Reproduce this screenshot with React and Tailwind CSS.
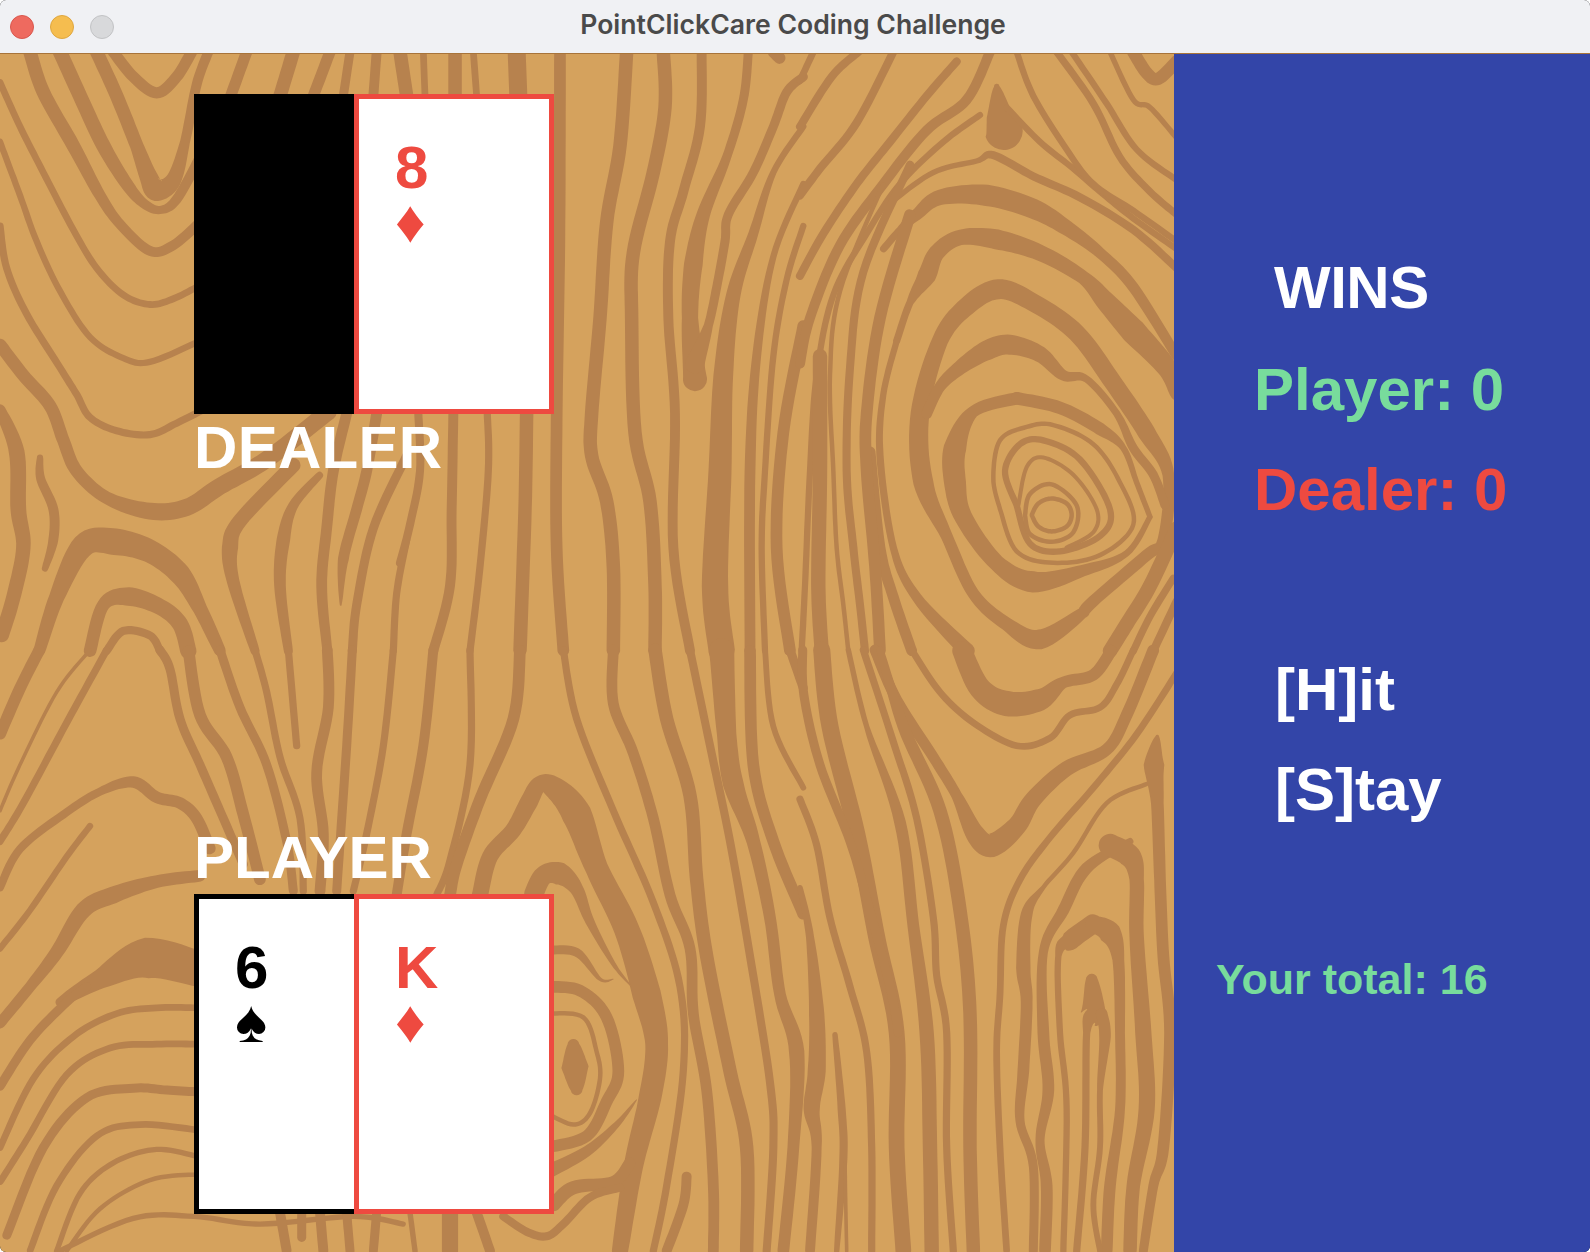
const WOOD = '#b7824e';

// grain traced from the reference, one zone per crop: [width, "x,y[,w] ..."]
const grain = [
  { ox: 0, oy: 50, lines: [
    [25, '340,5 400,70 470,112 530,70 575,5'],
    [30, '290,5 350,120 410,250 445,330,40 470,365,55 520,340,35 555,240,22 590,90,22 625,5'],
    [32, '180,5 240,120 310,250 380,350,28 430,400,22 480,418,18 530,390,22 600,280'],
    [30, '90,5 130,110 220,250 300,380,25 360,455,22 450,525,22 520,510 600,450'],
    [15, '0,85 60,200 130,320 220,470 290,570 370,640 450,665 520,650 600,615'],
    [14, '0,240 60,380 110,500 180,630 270,750 370,805 450,815 600,760'],
    [16, '0,460 20,570 80,690 180,830 230,900 270,960 350,995 450,1005 530,975 610,940'],
    [28, '0,770 70,850 150,930 190,1020 230,1100 320,1170 450,1205,38 560,1195 660,1140 800,1070 985,945'],
    [24, '0,940 50,1050,35 55,1200,35 70,1300,32 40,1430 5,1530'],
    [14, '120,1065 122,1120,20 160,1200,22 160,1280 135,1355,14'],
    [26, '118,1570 170,1430,34 250,1295,56 345,1285,66 450,1310,55 540,1370,50 600,1460,32 660,1570,26'],
    [28, '270,1570 310,1450 385,1428,42 480,1455,36 540,1500 565,1570'],
    [18, '320,1570 370,1518 450,1530 480,1570'],
    [16, '960,1110 880,1190,22 850,1280,30 840,1400,26 865,1570,20'],
    [32, '880,1085 720,1230 690,1300,36 700,1390,28 765,1570,20'],
    [24, '1040,950 1000,1100 980,1250 965,1400 982,1570,22'],
    [24, '1130,950 1100,1100 1070,1200 1030,1330 1022,1450,4'],
    [20, '1220,1060 1120,1250 1070,1450 1057,1570'],
    [16, '1220,1280 1190,1420 1180,1570'],
    [25, '740,5 690,125'],
    [30, '880,5 840,120'],
    [25, '990,5 940,120'],
    [20, '1050,5 1030,120'],
    [22, '1130,5 1120,120'],
  ] },
  { ox: 400, oy: 50, lines: [
    [30, '0,5 20,120'],
    [15, '70,5 75,120'],
    [30, '165,5 165,120'],
    [15, '220,5 230,120'],
    [40, '350,5 355,120'],
    [26, '480,5 478,500 470,960 470,1300 490,1570'],
    [30, '680,5 660,250 620,450 600,700 575,950 575,1060 620,1180 640,1350 640,1570'],
    [30, '790,5 795,150 760,320 700,530 695,700 705,1000 750,1180 765,1400 765,1570'],
    [22, '905,5 900,200 850,370 810,500 805,700 825,950 820,1300 870,1570'],
    [20, '1045,5 1030,130 980,280 910,430,30 880,560,42 870,700,36 885,860,58'],
    [20, '885,820,46 925,720,20 950,620 975,500 985,430 1060,320 1120,200 1160,110 1210,70'],
    [14, '1210,200 1120,320 1060,480,22 1000,640,32 970,850,45 960,1100,55 945,1400,65 965,1570,65'],
    [14, '1210,350 1120,540 1070,800,20 1050,1100,24 1050,1570'],
    [14, '1210,460 1160,600 1120,800 1095,1100 1085,1300 1095,1570'],
    [26, '1210,720 1150,1000 1130,1300 1170,1570'],
    [26, '1120,5 1140,22'],
    [18, '55,950 60,1100 30,1240 0,1340'],
    [22, '160,950 155,1200 150,1400 100,1570'],
    [16, '262,950 265,1100 240,1350 210,1570'],
    [30, '380,950 375,1200 360,1570'],
  ] },
  { ox: 800, oy: 50, lines: [
    [15, '40,5 0,80'],
    [18, '175,5 95,70 0,200'],
    [18, '280,5 170,190 60,310 0,380'],
    [18, '470,30 380,120 270,240 170,350 70,480 0,590'],
    [22, '570,5 500,130 380,210 250,350 120,510 30,700 0,820'],
    [20, '590,95,12 600,170,66 612,215,100'],
    [14, '540,170 430,240 300,350 200,480 100,640 50,850 30,1100 15,1400 5,1570'],
    [14, '620,150 720,240 820,310 900,370 1000,440 1130,520'],
    [14, '650,5 700,120 800,260 880,350 1000,420 1130,500'],
    [16, '770,5 880,140 960,280 1050,370 1130,430'],
    [14, '815,5 920,140 1010,260 1130,340'],
    [12, '930,5 1000,130 1050,150 1130,230'],
    [28, '1000,5 1040,60 1075,75 1130,30'],
    [12, '270,400 400,320 530,290 580,275,18 700,330 840,385 1000,470 1130,570'],
    [16, '250,520 300,470 350,430,26 420,385,34 560,380,50 700,415,46 800,465,34 900,530,24 1000,620 1130,800,22'],
    [16, '290,760 330,660 380,590,42 410,530,36 480,490,34 590,495,46 720,530,36 850,595,30 920,660,46 1000,735,62 1100,830,46 1130,900,28'],
    [14, '290,760 250,900 240,1060,16 280,1300 350,1430,22 500,1570,36'],
    [24, '210,1050 240,1300 280,1430 335,1570'],
    [24, '850,1470 720,1540,46 620,1500,30 520,1420,26 440,1270 370,1130,46 360,950,42 420,760,36 500,670,42 595,625,46 700,660,40 830,740 940,870 1040,1000 1105,1110,26 1090,1280 1040,1320 880,1440 850,1470'],
    [32, '380,950,24 420,880 480,830,32 560,785,46 630,770,46 720,795,36 790,850,24 860,860,16 950,950 1000,1040,20 1060,1110 1095,1190'],
    [46, '650,910,28 520,945,26 465,1040,54 465,1130,52 490,1220,40 590,1340,36 700,1390,50 850,1360,26 980,1315,14 1050,1220,12'],
    [28, '650,910 780,935 900,990 970,1040,14 1010,1130,12 1050,1220'],
    [10, '600,1200 580,1120 600,1020 680,985 760,980 880,1030 960,1130 1000,1240 900,1320 760,1340 650,1310 600,1200'],
    [14, '650,1190 615,1100 660,1030 730,1020 840,1070 930,1200 900,1270 780,1310 690,1290 650,1190'],
    [9, '655,1190 680,1090 730,1065 820,1110 890,1200 880,1260 800,1300'],
    [10, '675,1215 690,1160 755,1135 830,1190 820,1260 755,1285 690,1265 675,1215'],
    [10, '695,1215 715,1185 755,1172 800,1185 815,1215 800,1245 755,1258 715,1245 695,1215'],
    [32, '60,800 60,1100 55,1400 65,1570'],
    [10, '250,350 120,630 90,850 100,1100 110,1300 130,1450 145,1570'],
    [18, '330,300 190,580 150,830 140,1100 160,1300 180,1450 195,1570'],
    [26, '330,430 240,700 200,950 200,1100 225,1350 240,1570'],
    [32, '1130,1250 1050,1400 980,1500 930,1570'],
    [16, '1120,1380 1050,1480 1000,1570'],
    [18, '1130,1440 1060,1570'],
  ] },
  { ox: 0, oy: 650, lines: [
    [26, '118,0 60,100 0,220'],
    [8, '270,0 170,110 60,300 0,420'],
    [16, '320,0 200,190 70,400 0,500'],
    [20, '480,0 510,50 540,180 600,300 660,420 730,560'],
    [26, '565,0 600,170 680,280 730,430 780,600'],
    [20, '660,0 720,150 800,300 860,500 880,630'],
    [16, '765,0 800,110 840,280 900,440 910,630'],
    [16, '865,0 890,250'],
    [24, '982,0 985,150 950,320 970,480 960,630'],
    [20, '1057,0 1040,250 1010,630'],
    [16, '1180,0 1150,250 1100,480 1060,630'],
    [18, '0,620 60,520 190,430 300,370 400,345,26 470,385 540,400 590,440 630,520'],
    [14, '0,780 90,680 200,540 270,460'],
    [24, '0,975 90,880 170,790,30 250,680,36 340,640,38 470,605,28 600,590,26'],
    [20, '180,920 300,860,44 440,805,108 600,835,90'],
    [20, '0,1140 90,1020 200,920 260,880'],
    [15, '0,1300 100,1120 220,1010 350,950 470,935 600,935'],
    [15, '0,1390 80,1280 200,1110 330,1040 470,1030 600,1030'],
    [20, '20,1530 130,1300 260,1170 400,1145 500,1150 600,1155'],
    [15, '90,1570 170,1400 290,1270 420,1240 600,1255'],
    [12, '170,1570 240,1420 340,1340 470,1305 600,1325'],
    [10, '200,1570 300,1460 450,1385 600,1370'],
    [12, '180,1570 400,1485 582,1480 780,1500 1060,1480 1210,1500'],
    [22, '840,1470 860,1570'],
    [20, '905,1470 905,1535'],
    [22, '960,1470 970,1570'],
    [20, '1040,1470 1050,1570'],
    [20, '1130,1470 1120,1570'],
  ] },
  { ox: 400, oy: 650, lines: [
    [22, '100,0 70,250 20,480 -10,640'],
    [16, '210,0 210,300 150,550 110,640'],
    [26, '360,0 340,180 240,390 170,560 150,640'],
    [36, '240,640 270,540 340,470 385,400,40 420,350,36 470,365,56 530,430,76 590,570,54 680,730,62 740,900,72 770,1030,54 750,1170,54 700,1350,44 660,1570,36'],
    [44, '400,640 430,590 480,585,54 530,625,30 570,710,20 640,820,10 695,880,2'],
    [20, '440,785 530,790 600,860,8 640,860,2'],
    [26, '440,880 540,890 620,960 655,1100 620,1180 560,1270 440,1300'],
    [10, '440,950 550,960 590,1050 600,1120 570,1210 520,1240 440,1210'],
    [68, '520,1030,26 525,1090,68 530,1150,26'],
    [32, '440,1365 560,1310,24 650,1240,14 710,1175,2'],
    [30, '460,1450 520,1405 640,1390,26 690,1340'],
    [18, '310,1480 380,1520 440,1532 490,1500 570,1430 660,1405'],
    [16, '490,0 530,180 640,420 760,660 840,880 850,1100 800,1400 760,1570'],
    [24, '640,0 640,140 700,270 760,440 810,640 870,780 880,950 920,1150 940,1400 940,1570'],
    [21, '765,0,30 800,180 870,380 890,600 920,800 990,1100 1040,1300 1040,1570'],
    [18, '870,0 930,250 990,500 1050,800 1110,1130 1120,1300 1100,1570'],
    [62, '965,0 980,220,44 1000,350,48 1060,500,30 1110,700,26 1140,900,26 1190,1050,34 1180,1300,26 1150,1570,26'],
    [26, '1050,0 1060,300 1120,500 1210,690'],
    [13, '1095,0 1120,200 1210,360'],
    [20, '1170,0 1210,100'],
    [22, '860,1375 850,1450 800,1570'],
    [12, '30,1470 45,1570'],
    [36, '150,1470 150,1570'],
    [22, '230,1470 270,1570'],
  ] },
  { ox: 800, oy: 650, lines: [
    [44, '485,0 540,100,52 620,140,62 720,130,52 790,85,26 880,65,26 935,0'],
    [15, '335,0 420,110 520,190 650,250 750,230 810,170 900,150 950,90 1000,0'],
    [24, '225,0 290,130 400,280 470,380 525,480,44 575,510,58 650,460,44 700,390,38 800,310,34 920,260,26 980,170 1060,0'],
    [15, '1130,60 1010,220 880,360 750,490 660,600 610,720 600,900 590,1050 600,1300 620,1570'],
    [21, '1040,350,10 920,400 820,530 730,620 680,690,26 670,830,32 680,920,26 670,1100 660,1230,20 700,1350,20 700,1570'],
    [44, '1072,225,8 1062,300,48 1072,400,28 1080,600,26 1090,800 1110,1000 1090,1300 1060,1400,22 1030,1570,20'],
    [15, '990,500 860,570,26 790,680 730,790,20 730,1000,26 745,1150,26 720,1280,20 740,1400,26 735,1570'],
    [44, '930,510,54 990,540,54 1010,600,32 1010,750,32 1030,1000,36 1040,1200,36 1000,1400,30 990,1570,30'],
    [16, '880,715,44 810,760 775,800,14 780,1000 800,1200 790,1570'],
    [44, '880,715,36 930,740,54 955,810,26 960,1000,22 960,1200,22 930,1400,26 920,1570,26'],
    [26, '875,860,26 880,950,62 860,1000,16 855,1300 830,1570'],
    [26, '905,950,26 915,1010,26 900,1150,13 900,1300,13 880,1450 900,1570'],
    [38, '65,0 90,200 170,480 230,750 290,1000,35 290,1300,35 310,1570'],
    [12, '145,0 200,200 300,450,26 340,720 380,1000,32 390,1300 395,1570'],
    [16, '190,0 280,240 350,440 400,700 410,850 440,1000 440,1300 460,1570'],
    [16, '240,0 310,200,26 420,420,30 480,680 510,950 510,1300 520,1570'],
    [20, '8,0 12,120 60,300 150,500 200,650 270,880 295,1000'],
    [16, '0,390 50,510 90,700 150,880 200,1050 215,1300 215,1570'],
    [12, '0,620 30,750,18 50,950,34 50,1100,40 35,1200,36 50,1300,22 30,1570,22'],
    [12, '105,1005 125,1200,18 130,1330,18 110,1570,12'],
    [8, '135,1340 140,1570'],
  ] },
];

const thicken = (w) => w + Math.min(w * 0.35, 14);

const toPoint = (raw, zone, base) => {
  const [x, y, w] = raw.split(',').map(Number);
  return { x: zone.ox + x / 3, y: zone.oy + y / 2.613, base: w ?? base, w: thicken(w ?? base) / 3 };
};

// catmull-rom through the points, then an outline with the width at each sample
const ribbon = (zone, base, str) => {
  let last = base;
  const pts = str.split(' ').map((raw) => {
    const p = toPoint(raw, zone, last);
    last = p.base;
    return p;
  });
  const samples = [];
  for (let i = 0; i < pts.length - 1; i++) {
    const p0 = pts[Math.max(i - 1, 0)];
    const p1 = pts[i];
    const p2 = pts[i + 1];
    const p3 = pts[Math.min(i + 2, pts.length - 1)];
    for (let s = 0; s < 10; s++) {
      const t = s / 10;
      const cr = (a, b, c, d) =>
        0.5 * (2 * b + (c - a) * t + (2 * a - 5 * b + 4 * c - d) * t * t + (3 * b - a - 3 * c + d) * t * t * t);
      samples.push({ x: cr(p0.x, p1.x, p2.x, p3.x), y: cr(p0.y, p1.y, p2.y, p3.y), w: p1.w + (p2.w - p1.w) * t });
    }
  }
  samples.push(pts[pts.length - 1]);
  const left = [];
  const right = [];
  samples.forEach((p, i) => {
    const a = samples[Math.max(i - 1, 0)];
    const b = samples[Math.min(i + 1, samples.length - 1)];
    const len = Math.hypot(b.x - a.x, b.y - a.y) || 1;
    const nx = (-(b.y - a.y) / len) * (p.w / 2);
    const ny = ((b.x - a.x) / len) * (p.w / 2);
    left.push(`${(p.x + nx).toFixed(1)} ${(p.y + ny).toFixed(1)}`);
    right.unshift(`${(p.x - nx).toFixed(1)} ${(p.y - ny).toFixed(1)}`);
  });
  const endR = (pts[pts.length - 1].w / 2).toFixed(1);
  const startR = (pts[0].w / 2).toFixed(1);
  return `M${left.join('L')}A${endR} ${endR} 0 0 0 ${right[0]}L${right.join('L')}A${startR} ${startR} 0 0 0 ${left[0]}Z`;
};

const WoodGrain = () => (
  <svg className="absolute inset-0" width="1174" height="1198" viewBox="0 54 1174 1198">
    {grain.map((zone) =>
      zone.lines.map(([base, str], i) => <path key={`${zone.ox}-${zone.oy}-${i}`} d={ribbon(zone, base, str)} fill={WOOD} />)
    )}
  </svg>
);

const Card = ({ rank, suit, red, faceDown, second }) => (
  <div
    className={`w-[200px] h-[320px] border-[5px] pl-[36px] pt-[42px] font-bold text-[60px] leading-[54px] ${
      faceDown ? 'bg-black border-black' : 'bg-white'
    } ${!faceDown && (red ? 'border-[#ee4a40] text-[#ee4a40]' : 'border-black text-black')} ${second ? 'ml-[-40px] relative' : ''}`}
  >
    {!faceDown && (
      <>
        <div>{rank}</div>
        <div>{suit}</div>
      </>
    )}
  </div>
);

const SideRow = ({ children, className }) => <div className={`h-[100px] flex items-center font-bold ${className}`}>{children}</div>;

export default function App() {
  return (
    <div className="w-[1590px] h-[1252px] flex flex-col overflow-hidden bg-black rounded-[6px] font-['Liberation_Sans',sans-serif]">
      {/* Title bar */}
      <div className="h-[54px] shrink-0 bg-[#f0f1f4] flex items-center relative border-b border-[#a8743a]">
        <div className="flex gap-[16px] pl-[10px]">
          <span className="w-[24px] h-[24px] rounded-full bg-[#ee6a5f] border border-[#d9574d]" />
          <span className="w-[24px] h-[24px] rounded-full bg-[#f5bd4f] border border-[#dfa73f]" />
          <span className="w-[24px] h-[24px] rounded-full bg-[#d8d9db] border border-[#c2c3c5]" />
        </div>
        <div className="absolute inset-0 flex items-center justify-center pb-[4px] pr-[4px] font-['Inter',sans-serif] font-semibold text-[26.6px] text-[#4a4a4a]">
          PointClickCare Coding Challenge
        </div>
      </div>

      <div className="flex flex-1 min-h-0">
        {/* Table */}
        <div className="relative w-[1174px] bg-[#d5a25d] overflow-hidden">
          <WoodGrain />
          <div className="relative h-full flex flex-col justify-between pl-[194px] pt-[40px] pb-[38px]">
            <div>
              <div className="flex">
                <Card faceDown />
                <Card rank="8" suit="♦" red second />
              </div>
              <div className="mt-[4px] text-white font-bold text-[60px] leading-[60px] tracking-[0.3px]">DEALER</div>
            </div>
            <div>
              <div className="mb-[6px] text-white font-bold text-[60px] leading-[60px]">PLAYER</div>
              <div className="flex">
                <Card rank="6" suit="♠" />
                <Card rank="K" suit="♦" red second />
              </div>
            </div>
          </div>
        </div>

        {/* Side panel */}
        <div className="flex-1 bg-[#3345a8] pt-[184px] text-[60px] leading-none">
          <SideRow className="pl-[100px] text-white tracking-[-0.5px]">WINS</SideRow>
          <SideRow className="pl-[80px] pt-[3px] text-[#78dc9c]">Player: 0</SideRow>
          <SideRow className="pl-[80px] pt-[3px] text-[#ee4a40]">Dealer: 0</SideRow>
          <SideRow className="pl-[101px] pt-[3px] mt-[100px] text-white">[H]it</SideRow>
          <SideRow className="pl-[101px] pt-[3px] text-white">[S]tay</SideRow>
          <SideRow className="pl-[42px] pt-[2px] mt-[90px] text-[#78dc9c] text-[43px]">Your total: 16</SideRow>
        </div>
      </div>
    </div>
  );
}
